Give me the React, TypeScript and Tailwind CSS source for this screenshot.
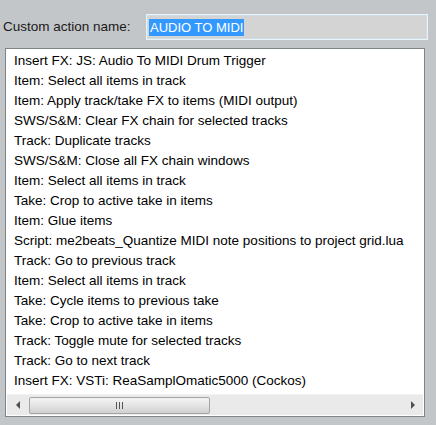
export default function App() {
  const items = [
    'Insert FX: JS: Audio To MIDI Drum Trigger',
    'Item: Select all items in track',
    'Item: Apply track/take FX to items (MIDI output)',
    'SWS/S&M: Clear FX chain for selected tracks',
    'Track: Duplicate tracks',
    'SWS/S&M: Close all FX chain windows',
    'Item: Select all items in track',
    'Take: Crop to active take in items',
    'Item: Glue items',
    'Script: me2beats_Quantize MIDI note positions to project grid.lua',
    'Track: Go to previous track',
    'Item: Select all items in track',
    'Take: Cycle items to previous take',
    'Take: Crop to active take in items',
    'Track: Toggle mute for selected tracks',
    'Track: Go to next track',
    'Insert FX: VSTi: ReaSamplOmatic5000 (Cockos)',
  ]

  return (
    <div
      className="w-[436px] h-[425px] bg-[#c3c6c8] overflow-hidden text-[13.5px] text-black"
      style={{ fontFamily: '"Liberation Sans", Arial, sans-serif' }}
    >
      <div className="flex items-center h-[26px] mt-[14px] pl-[3px] pr-[8px]">
        <span className="w-[143px] text-[#1a1a1a]">Custom action name:</span>
        <div className="flex-1 h-[26px] bg-[#d4d4d4] border border-[#e9f3f8] shadow-[inset_0_0_0_1px_#cfdde6] flex items-center pl-[2px]">
          <span className="bg-[#3399ff] text-white text-[13px] leading-[17px] px-[1px]">AUDIO TO MIDI</span>
        </div>
      </div>

      <div className="ml-[5px] mr-[11px] mt-[8px] h-[369px] bg-white border border-[#7e8588] flex flex-col">
        <div className="flex-1 pt-[2px] pl-[8px] overflow-hidden">
          {items.map((t, i) => (
            <div key={i} className="h-[20px] leading-[20px] whitespace-nowrap">
              {t}
            </div>
          ))}
        </div>
        <div className="h-[21px] mx-[1px] mb-[1px] bg-[#eaeaea] border-t border-[#f2f2f2] flex items-center">
          <div className="w-[22px] flex justify-center">
            <svg width="5" height="8" viewBox="0 0 5 8">
              <path d="M4 0 L0 4 L4 8 Z" fill="#505050" />
            </svg>
          </div>
          <div className="w-[181px] h-[17px] rounded-[2px] border border-[#a4a4a4] bg-gradient-to-b from-[#f4f4f4] via-[#e4e4e4] to-[#d0d0d0] flex items-center justify-center gap-[2px]">
            <span className="w-[1px] h-[7px] bg-[#555]" />
            <span className="w-[1px] h-[7px] bg-[#555]" />
            <span className="w-[1px] h-[7px] bg-[#555]" />
          </div>
          <div className="flex-1" />
          <div className="w-[22px] flex justify-center">
            <svg width="5" height="8" viewBox="0 0 5 8">
              <path d="M1 0 L5 4 L1 8 Z" fill="#505050" />
            </svg>
          </div>
        </div>
      </div>
    </div>
  )
}
